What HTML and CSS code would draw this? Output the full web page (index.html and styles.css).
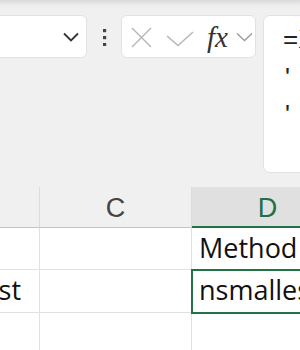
FILE: index.html
```html
<!DOCTYPE html>
<html lang="en">
<head>
    <meta charset="UTF-8">
    <meta name="viewport" content="width=device-width, initial-scale=1.0">
    <title>Sheet</title>
    <link rel="stylesheet" href="styles.css">
</head>
<body>
    <div class="toolbar">
        <div class="name-box">
            <svg class="chevron" width="16" height="10" viewBox="0 0 16 10">
                <polyline points="1,1.5 8,8.5 15,1.5" fill="none" stroke="#333" stroke-width="1.8"/>
            </svg>
        </div>
        <svg class="dots" width="5" height="17" viewBox="0 0 5 17">
            <rect x="1" y="0" width="3.2" height="3.2" fill="#444"/>
            <rect x="1" y="7" width="3.2" height="3.2" fill="#444"/>
            <rect x="1" y="14" width="3.2" height="3.2" fill="#444"/>
        </svg>
        <div class="fx-box">
            <svg class="cancel" width="21" height="21" viewBox="0 0 21 21">
                <path d="M1 1 L20 20 M20 1 L1 20" stroke="#b5b5b5" stroke-width="1.4" fill="none"/>
            </svg>
            <svg class="enter" width="28" height="16" viewBox="0 0 28 16">
                <polyline points="1,5 12,14.5 27,1" fill="none" stroke="#b5b5b5" stroke-width="1.4"/>
            </svg>
            <span class="fx">fx</span>
            <svg class="fx-chevron" width="17" height="10" viewBox="0 0 17 10">
                <polyline points="1,1.5 8.5,8.5 16,1.5" fill="none" stroke="#999" stroke-width="1.3"/>
            </svg>
        </div>
        <div class="formula">
            <div class="line">=X</div>
            <div class="line">'&nbsp;&thinsp;a</div>
            <div class="line">'&nbsp;&thinsp;a</div>
        </div>
    </div>

    <div class="grid">
        <div class="col-head">B</div>
        <div class="col-head">C</div>
        <div class="col-head active">D</div>

        <div class="cell"></div>
        <div class="cell"></div>
        <div class="cell">Method</div>

        <div class="cell">Smallest</div>
        <div class="cell"></div>
        <div class="cell selected">nsmallest</div>

        <div class="cell"></div>
        <div class="cell"></div>
        <div class="cell"></div>
    </div>
</body>
</html>
```

FILE: styles.css
```css
body {
    margin: 0;
    width: 300px;
    height: 350px;
    overflow: hidden;
    font-family: "Liberation Sans", Arial, sans-serif;
    background: linear-gradient(#d9d9d9 0px, #ececec 5px, #f0f0f0 8px);
    background-color: #f0f0f0;
}

.toolbar {
    display: flex;
    align-items: flex-start;
    padding-top: 15px;
    height: 158px;
}

.name-box {
    flex: none;
    width: 100px;
    height: 43px;
    margin-left: -13px;
    box-sizing: border-box;
    background: #fff;
    border: 1px solid #e2e2e2;
    border-radius: 6px;
    display: flex;
    align-items: center;
    justify-content: flex-end;
    padding-right: 7px;
}

.dots {
    flex: none;
    margin: 14px 0 0 15px;
}

.fx-box {
    flex: none;
    width: 135px;
    height: 43px;
    margin-left: 14px;
    box-sizing: border-box;
    background: #fff;
    border: 1px solid #e2e2e2;
    border-radius: 6px;
    display: flex;
    align-items: center;
    padding-left: 9px;
}

.cancel {
    flex: none;
    margin-top: 2px;
}

.enter {
    flex: none;
    margin: 4px 0 0 14px;
}

.fx {
    font-family: "Liberation Serif", "Times New Roman", serif;
    font-style: italic;
    font-size: 29px;
    color: #333;
    margin-left: 13px;
    margin-top: 1px;
}

.fx-chevron {
    flex: none;
    margin: 1px 0 0 8px;
}

.formula {
    flex: none;
    width: 60px;
    height: 158px;
    margin-left: 7px;
    box-sizing: border-box;
    background: #fff;
    border: 1px solid #e2e2e2;
    border-radius: 7px;
    padding: 5px 0 0 19px;
    font-size: 26px;
    line-height: 37.5px;
    color: #222;
    white-space: nowrap;
    overflow: hidden;
}

.formula .line + .line {
    padding-left: 2px;
}

.grid {
    display: grid;
    grid-template-columns: 132px 152px 152px;
    grid-template-rows: 41px 42px 43px 42px;
    margin-top: 14px;
    margin-left: -92px;
}

.col-head {
    box-sizing: border-box;
    border-right: 1px solid #dcdcdc;
    border-bottom: 1px solid #c4c4c4;
    text-align: center;
    font-size: 27px;
    line-height: 40px;
    padding-top: 1px;
    color: #444;
}

.col-head.active {
    background: #e0e0e0;
    color: #1e7145;
    border-bottom: 2px solid #217346;
}

.cell {
    box-sizing: border-box;
    background: #fff;
    border-right: 1px solid #e1e1e1;
    border-bottom: 1px solid #e1e1e1;
    font-family: "Open Sans", "Liberation Sans", sans-serif;
    font-size: 27px;
    line-height: 30px;
    padding: 5px 0 0 7px;
    color: #111;
    white-space: nowrap;
    overflow: hidden;
}

.cell.selected {
    outline: 2px solid #217346;
    outline-offset: -1px;
    position: relative;
}
```
